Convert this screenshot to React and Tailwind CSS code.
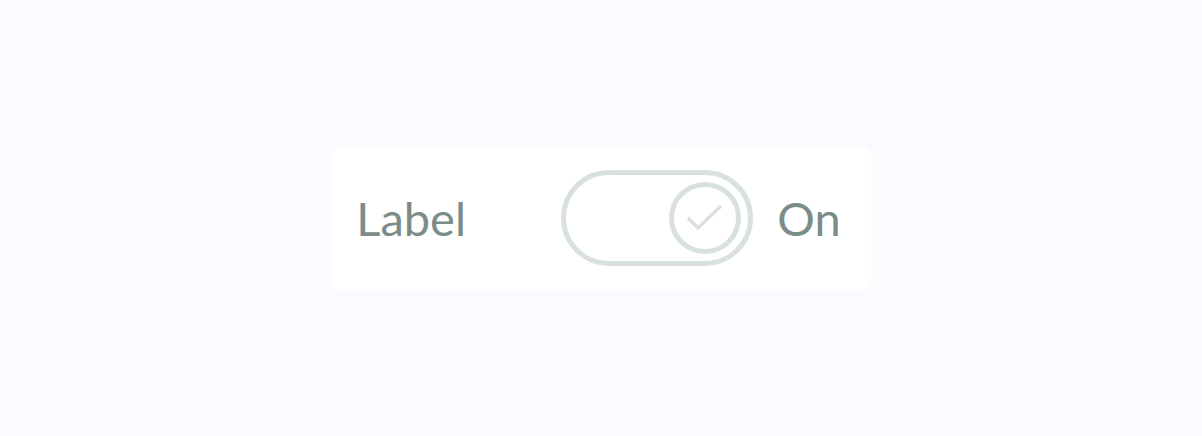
import React, { useState } from "react"

function Toggle({ on, onChange }) {
    return (
        <button
            type="button"
            onClick={() => onChange(!on)}
            className={`flex items-center w-[192px] h-[96px] rounded-full border-[5px] border-[#d9e1df] bg-white px-[7px] ${on ? "justify-end" : "justify-start"}`}>
            <span className="flex items-center justify-center w-[72px] h-[72px] rounded-full border-[5px] border-[#d9e1df]">
                {on && (
                    <svg width="40" height="40" viewBox="0 0 40 40" fill="none">
                        <path d="M3 20 L13 30 L36 8" stroke="#d9e1df" strokeWidth="3.5" />
                    </svg>
                )}
            </span>
        </button>
    )
}

export default function App() {
    const [on, setOn] = useState(true)

    return (
        <div className="min-h-screen bg-[#fbfaff] flex items-center justify-center" style={{ fontFamily: "Lato, 'Open Sans', sans-serif" }}>
            <div className="flex items-center bg-white rounded-[10px] pl-[25px] pr-[30px] py-6">
                <p className="text-[47px] text-[#7b8c89] leading-none w-[205px]">Label</p>
                <Toggle on={on} onChange={setOn} />
                <p className="text-[47px] text-[#7b8c89] leading-none ml-[24px]">{on ? "On" : "Off"}</p>
            </div>
        </div>
    )
}
